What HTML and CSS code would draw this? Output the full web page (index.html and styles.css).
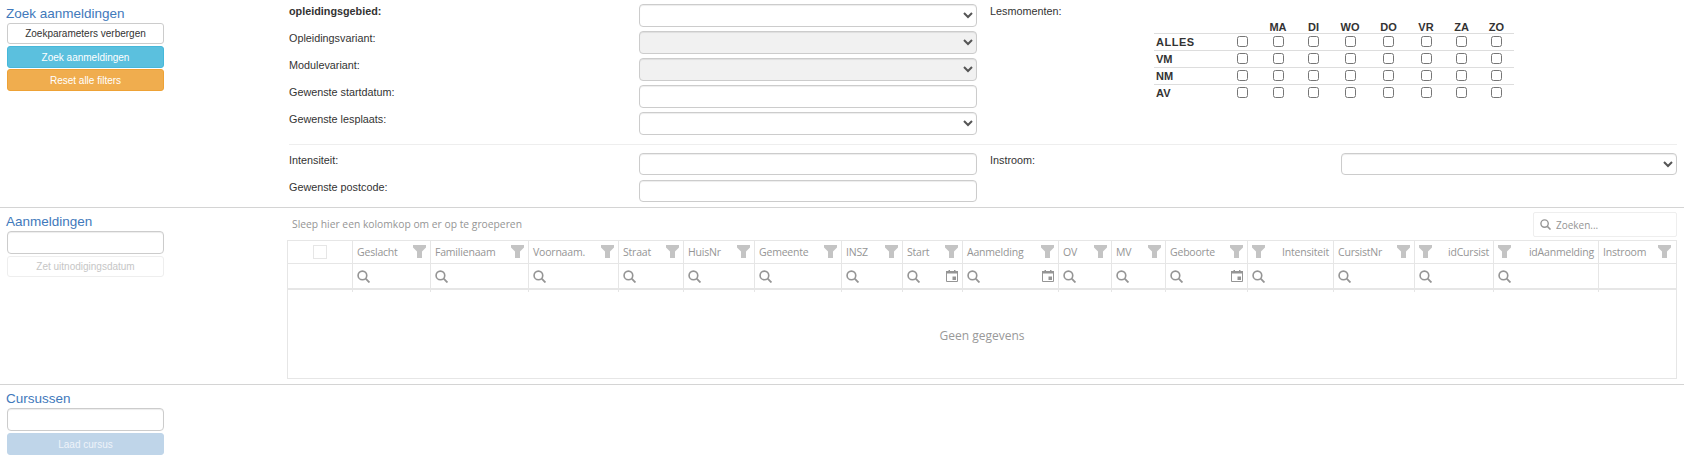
FILE: index.html
```html
<!DOCTYPE html>
<html lang="nl">
<head>
<meta charset="utf-8">
<title>Zoek aanmeldingen</title>
<link rel="stylesheet" href="styles.css">
</head>
<body>
<svg class="defs" width="0" height="0" aria-hidden="true">
  <symbol id="funnel" viewBox="0 0 13 13"><path d="M0 0H13V2.5L9 6.5V13H4V6.5L0 2.5Z"/></symbol>
  <symbol id="search" viewBox="0 0 12 12"><circle cx="5" cy="5" r="4" fill="none" stroke-width="1.5"/><path d="M8 8L11.5 11.5" fill="none" stroke-width="1.7"/></symbol>
  <symbol id="cal" viewBox="0 0 12 12"><path d="M0.5 1.5H11.5V11.5H0.5Z" fill="none" stroke-width="1"/><path d="M0 1H12V3.5H0Z" stroke="none"/><path d="M2.5 0H4V2H2.5ZM8 0H9.5V2H8Z" stroke="none"/><path d="M6.5 6.5H10V10H6.5Z" stroke="none"/></symbol>
</svg>

<section class="section section-search">
  <aside class="side">
    <h2 class="title">Zoek aanmeldingen</h2>
    <button class="btn btn-default">Zoekparameters verbergen</button>
    <button class="btn btn-info">Zoek aanmeldingen</button>
    <button class="btn btn-warning">Reset alle filters</button>
  </aside>
  <div class="filters">
    <div class="filter-top">
      <div class="form-col">
        <div class="form-row"><label class="lbl lbl-bold">opleidingsgebied:</label><select class="ctl"></select></div>
        <div class="form-row"><label class="lbl">Opleidingsvariant:</label><select class="ctl ctl-off" aria-disabled="true"></select></div>
        <div class="form-row"><label class="lbl">Modulevariant:</label><select class="ctl ctl-off" aria-disabled="true"></select></div>
        <div class="form-row"><label class="lbl">Gewenste startdatum:</label><input class="ctl" type="text"></div>
        <div class="form-row"><label class="lbl">Gewenste lesplaats:</label><select class="ctl"></select></div>
      </div>
      <div class="moments">
        <label class="lbl moments-lbl">Lesmomenten:</label>
        <table class="week">
          <thead><tr><th></th><th></th><th>MA</th><th>DI</th><th>WO</th><th>DO</th><th>VR</th><th>ZA</th><th>ZO</th></tr></thead>
          <tbody>
            <tr><th class="alles">ALLES</th><td><input type="checkbox"></td><td><input type="checkbox"></td><td><input type="checkbox"></td><td><input type="checkbox"></td><td><input type="checkbox"></td><td><input type="checkbox"></td><td><input type="checkbox"></td><td><input type="checkbox"></td></tr>
            <tr><th>VM</th><td><input type="checkbox"></td><td><input type="checkbox"></td><td><input type="checkbox"></td><td><input type="checkbox"></td><td><input type="checkbox"></td><td><input type="checkbox"></td><td><input type="checkbox"></td><td><input type="checkbox"></td></tr>
            <tr><th>NM</th><td><input type="checkbox"></td><td><input type="checkbox"></td><td><input type="checkbox"></td><td><input type="checkbox"></td><td><input type="checkbox"></td><td><input type="checkbox"></td><td><input type="checkbox"></td><td><input type="checkbox"></td></tr>
            <tr><th>AV</th><td><input type="checkbox"></td><td><input type="checkbox"></td><td><input type="checkbox"></td><td><input type="checkbox"></td><td><input type="checkbox"></td><td><input type="checkbox"></td><td><input type="checkbox"></td><td><input type="checkbox"></td></tr>
          </tbody>
        </table>
      </div>
    </div>
    <hr class="rule">
    <div class="filter-bottom">
      <div class="form-col">
        <div class="form-row form-row-low"><label class="lbl">Intensiteit:</label><input class="ctl ctl-low" type="text"></div>
        <div class="form-row form-row-low"><label class="lbl">Gewenste postcode:</label><input class="ctl ctl-low" type="text"></div>
      </div>
      <div class="instroom">
        <label class="lbl instroom-lbl">Instroom:</label>
        <select class="ctl ctl-low ctl-instroom"></select>
      </div>
    </div>
  </div>
</section>

<section class="section section-grid">
  <aside class="side">
    <h2 class="title">Aanmeldingen</h2>
    <input class="ctl side-input" type="text">
    <button class="btn btn-muted" disabled>Zet uitnodigingsdatum</button>
  </aside>
  <div class="datagrid">
    <div class="toolbar">
      <span class="group-hint">Sleep hier een kolomkop om er op te groeperen</span>
      <div class="searchbox"><svg class="ic ic-search ic-box"><use href="#search"/></svg><input class="search-input" type="text" placeholder="Zoeken..."></div>
    </div>
    <div class="grid-table">
      <div class="cols head">
        <div class="cell"><span class="selectall"></span></div>
        <div class="cell"><span class="h">Geslacht</span><svg class="ic ic-f"><use href="#funnel"/></svg></div>
        <div class="cell"><span class="h">Familienaam</span><svg class="ic ic-f"><use href="#funnel"/></svg></div>
        <div class="cell"><span class="h">Voornaam.</span><svg class="ic ic-f"><use href="#funnel"/></svg></div>
        <div class="cell"><span class="h">Straat</span><svg class="ic ic-f"><use href="#funnel"/></svg></div>
        <div class="cell"><span class="h">HuisNr</span><svg class="ic ic-f"><use href="#funnel"/></svg></div>
        <div class="cell"><span class="h">Gemeente</span><svg class="ic ic-f"><use href="#funnel"/></svg></div>
        <div class="cell"><span class="h">INSZ</span><svg class="ic ic-f"><use href="#funnel"/></svg></div>
        <div class="cell"><span class="h">Start</span><svg class="ic ic-f"><use href="#funnel"/></svg></div>
        <div class="cell"><span class="h">Aanmelding</span><svg class="ic ic-f"><use href="#funnel"/></svg></div>
        <div class="cell"><span class="h">OV</span><svg class="ic ic-f"><use href="#funnel"/></svg></div>
        <div class="cell"><span class="h">MV</span><svg class="ic ic-f"><use href="#funnel"/></svg></div>
        <div class="cell"><span class="h">Geboorte</span><svg class="ic ic-f"><use href="#funnel"/></svg></div>
        <div class="cell"><svg class="ic ic-f"><use href="#funnel"/></svg><span class="h">Intensiteit</span></div>
        <div class="cell"><span class="h">CursistNr</span><svg class="ic ic-f"><use href="#funnel"/></svg></div>
        <div class="cell"><svg class="ic ic-f"><use href="#funnel"/></svg><span class="h">idCursist</span></div>
        <div class="cell"><svg class="ic ic-f"><use href="#funnel"/></svg><span class="h">idAanmelding</span></div>
        <div class="cell"><span class="h">Instroom</span><svg class="ic ic-f"><use href="#funnel"/></svg></div>
      </div>
      <div class="cols filter">
        <div class="cell"></div>
        <div class="cell"><svg class="ic ic-search"><use href="#search"/></svg></div>
        <div class="cell"><svg class="ic ic-search"><use href="#search"/></svg></div>
        <div class="cell"><svg class="ic ic-search"><use href="#search"/></svg></div>
        <div class="cell"><svg class="ic ic-search"><use href="#search"/></svg></div>
        <div class="cell"><svg class="ic ic-search"><use href="#search"/></svg></div>
        <div class="cell"><svg class="ic ic-search"><use href="#search"/></svg></div>
        <div class="cell"><svg class="ic ic-search"><use href="#search"/></svg></div>
        <div class="cell"><svg class="ic ic-search"><use href="#search"/></svg><svg class="ic ic-cal"><use href="#cal"/></svg></div>
        <div class="cell"><svg class="ic ic-search"><use href="#search"/></svg><svg class="ic ic-cal"><use href="#cal"/></svg></div>
        <div class="cell"><svg class="ic ic-search"><use href="#search"/></svg></div>
        <div class="cell"><svg class="ic ic-search"><use href="#search"/></svg></div>
        <div class="cell"><svg class="ic ic-search"><use href="#search"/></svg><svg class="ic ic-cal"><use href="#cal"/></svg></div>
        <div class="cell"><svg class="ic ic-search"><use href="#search"/></svg></div>
        <div class="cell"><svg class="ic ic-search"><use href="#search"/></svg></div>
        <div class="cell"><svg class="ic ic-search"><use href="#search"/></svg></div>
        <div class="cell"><svg class="ic ic-search"><use href="#search"/></svg></div>
        <div class="cell"></div>
      </div>
      <div class="cols ticks">
        <div class="cell"></div><div class="cell"></div><div class="cell"></div><div class="cell"></div><div class="cell"></div><div class="cell"></div><div class="cell"></div><div class="cell"></div><div class="cell"></div><div class="cell"></div><div class="cell"></div><div class="cell"></div><div class="cell"></div><div class="cell"></div><div class="cell"></div><div class="cell"></div><div class="cell"></div><div class="cell"></div>
      </div>
      <div class="nodata">Geen gegevens</div>
    </div>
  </div>
</section>

<section class="section section-courses">
  <aside class="side">
    <h2 class="title">Cursussen</h2>
    <input class="ctl side-input" type="text">
    <button class="btn btn-disabled" disabled>Laad cursus</button>
  </aside>
</section>
</body>
</html>
```

FILE: styles.css
```css
* { box-sizing: border-box; }
html, body { margin: 0; padding: 0; background: #fff; }
body { font-family: "Liberation Sans", Arial, sans-serif; font-size: 11px; color: #333; width: 1684px; height: 466px; overflow: hidden; }
.defs { display: block; height: 0; }

.section { display: flex; }
.section-search { height: 208px; border-bottom: 1px solid #d4d4d4; }
.section-grid { height: 177px; border-bottom: 1px solid #d4d4d4; }

.side { width: 287px; flex: none; padding-left: 7px; }
.title { margin: 6px 0 1px -1px; font-size: 13.5px; font-weight: 400; line-height: 16px; color: #4179bb; }

.btn { display: block; width: 157px; height: 22px; padding: 0; border: 1px solid transparent; border-radius: 3px; font: 10px "Liberation Sans", Arial, sans-serif; margin-bottom: 1px; text-align: center; }
.btn-default { height: 21px; margin-bottom: 2px; background: #fff; border-color: #ccc; color: #333; }
.btn-info { background: #5bc0de; border-color: #46b8da; color: #fff; }
.btn-warning { background: #f0ad4e; border-color: #eea236; color: #fff; }
.btn-muted { height: 21px; background: #fff; border-color: #eee; color: #c6c6c6; }
.btn-disabled { background: #bfd5e9; border-color: #bfd5e9; color: #eef3f9; }

.filters { flex: 1; padding: 4px 7px 0 2px; }
.filter-top, .filter-bottom { display: flex; }
.form-col { width: 688px; flex: none; display: flex; flex-direction: column; }
.form-row { display: flex; height: 27px; }
.lbl { display: block; font-size: 10.8px; line-height: 14px; color: #333; }
.form-row .lbl { width: 350px; flex: none; }
.lbl-bold { font-weight: 700; }
.ctl { display: block; width: 338px; height: 23px; padding: 0 6px; background-color: #fff; border: 1px solid #ccc; border-radius: 4px; box-shadow: inset 0 1px 1px rgba(0,0,0,.075); font: 11px "Liberation Sans", Arial, sans-serif; color: #555; outline: none; }
.ctl-off { background-color: #f1f1f1; }
.ctl-low { height: 22px; }
.moments { display: flex; flex: 1; margin-left: 13px; }
.moments-lbl { width: 164px; flex: none; }
.week { width: 360px; height: 81px; margin-top: 12px; border-collapse: collapse; table-layout: fixed; font-size: 11px; }
.week th { padding: 0; font-weight: 700; text-align: center; color: #333; height: 17px; }
.week thead th { height: 17px; padding-top: 5px; }
.week thead th:nth-child(1) { width: 70px; }
.week thead th:nth-child(2), .week thead th:nth-child(3), .week thead th:nth-child(7) { width: 36px; }
.week thead th:nth-child(4), .week thead th:nth-child(8), .week thead th:nth-child(9) { width: 35px; }
.week thead th:nth-child(5) { width: 38px; }
.week thead th:nth-child(6) { width: 39px; }
.week tbody th { text-align: left; padding-left: 2px; }
.week tbody tr { border-top: 1px solid #ddd; }
.week td { padding: 0; text-align: center; vertical-align: top; height: 17px; }
.week input { display: inline-block; width: 11px; height: 11px; margin: 2px 0 0; }
.week .alles { letter-spacing: .5px; }
.rule { margin: 5px 0 8px; border: 0; border-top: 1px solid #eee; }
.instroom { flex: 1; margin-left: 13px; display: flex; justify-content: space-between; }
.ctl-instroom { width: 336px; }

.datagrid { flex: 1; padding-right: 7px; display: flex; flex-direction: column; }
.toolbar { height: 32px; display: flex; justify-content: space-between; align-items: flex-start; padding-top: 4px; }
.group-hint { font: 10.3px "Open Sans", sans-serif; color: #959595; padding: 4px 0 0 5px; line-height: 16px; }
.searchbox { width: 144px; height: 25px; display: flex; align-items: center; gap: 5px; padding-left: 6px; border: 1px solid #eee; border-radius: 2px; }
.search-input { flex: 1; min-width: 0; border: 0; padding: 0; outline: none; font: 10px "Open Sans", sans-serif; color: #333; }
.search-input::placeholder { color: #959595; opacity: 1; }

.grid-table { flex: 1; border: 1px solid #e6e6e6; margin-bottom: 5px; display: flex; flex-direction: column; }
.cols { display: grid; grid-template-columns: 65px 78px 98px 90px 65px 71px 87px 61px 60px 96px 53px 54px 82px 86px 81px 79px 105px 76px; }
.head { height: 23px; border-bottom: 1px solid #e6e6e6; }
.filter { height: 26px; border-bottom: 2px solid #e6e6e6; }
.ticks { height: 2px; }
.cell { display: flex; align-items: center; justify-content: space-between; padding: 0 4px; border-right: 1px solid #e6e6e6; min-width: 0; }
.cols .cell:last-child { border-right: 0; }
.selectall { display: block; width: 14px; height: 14px; margin-left: 21px; border: 1px solid #e6e6e6; }
.h { font: 10.5px "Open Sans", sans-serif; letter-spacing: -.2px; color: #959595; white-space: nowrap; }
.ic { display: block; flex: none; }
.ic-f { width: 13px; height: 13px; fill: #c4c4c4; margin-top: -2px; }
.ic-search { width: 13px; height: 13px; stroke: #959595; fill: #959595; }
.ic-box { width: 11px; height: 11px; }
.ic-cal { width: 12px; height: 12px; fill: #959595; stroke: #959595; }
.nodata { flex: 1; display: flex; align-items: center; justify-content: center; font: 12px "Open Sans", sans-serif; color: #999; }

.side-input { width: 157px; margin-bottom: 2px; }
.section-courses { flex: 1; }
```
